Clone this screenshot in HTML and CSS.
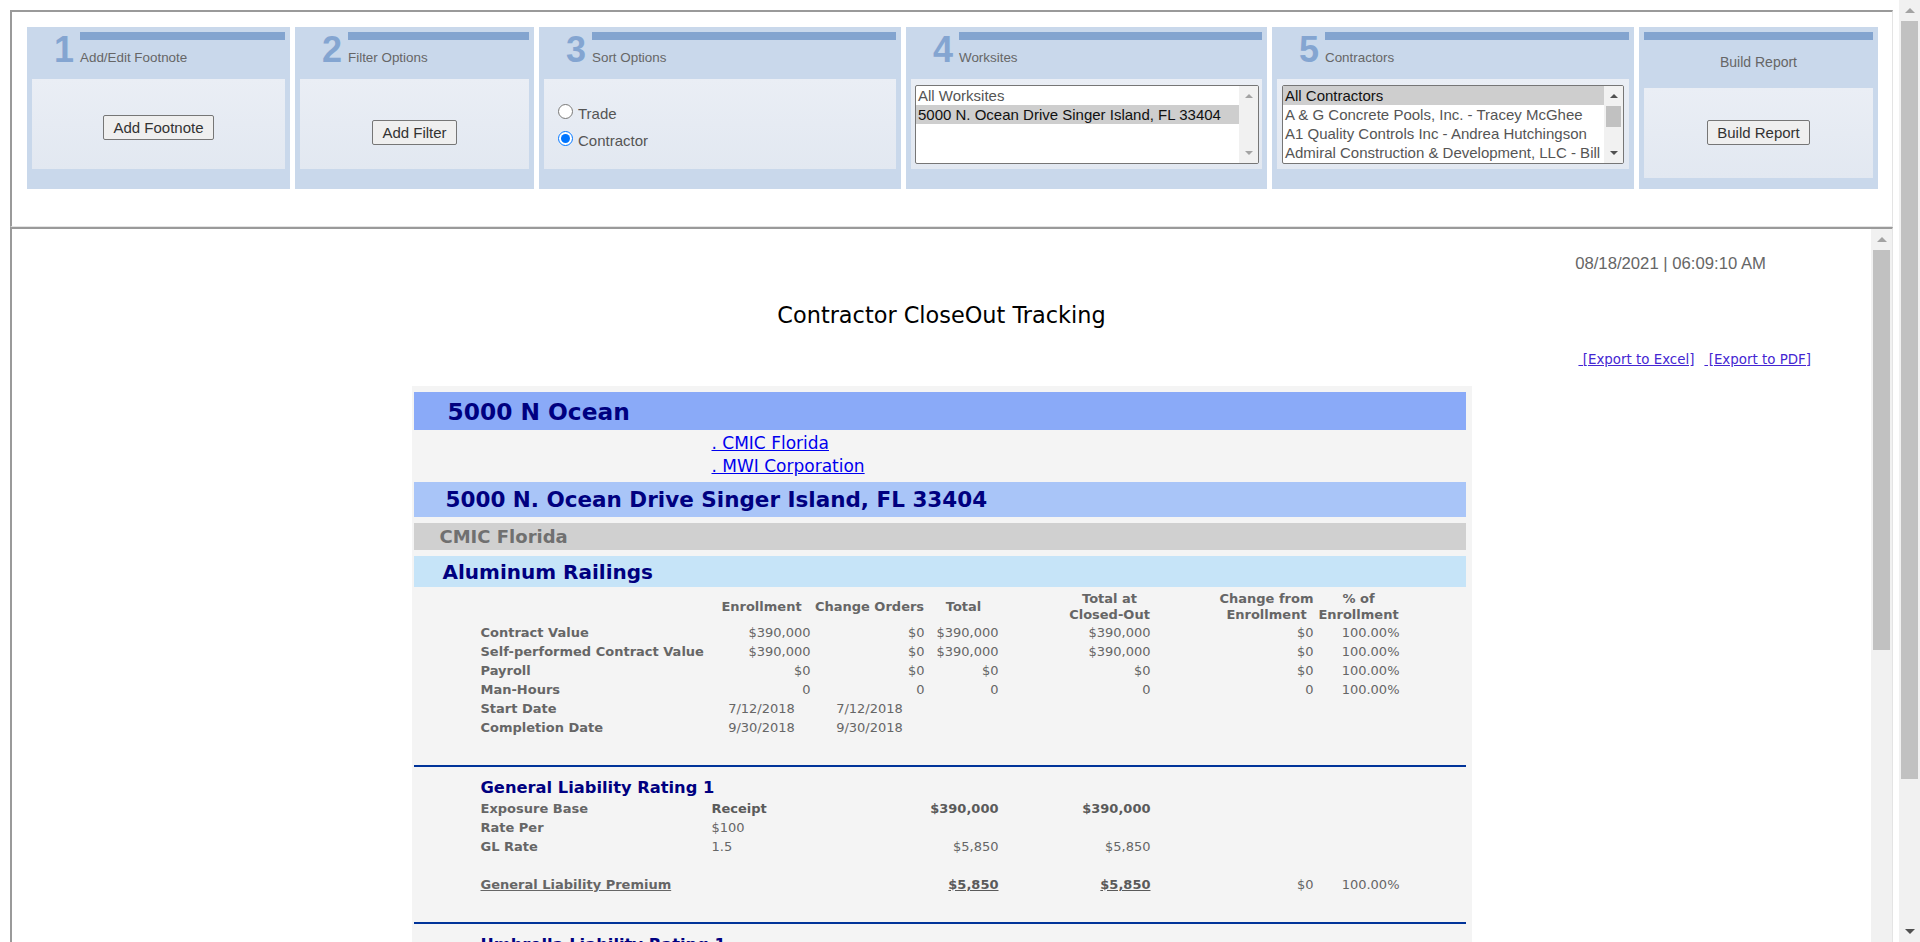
FILE: index.html
```html
<!DOCTYPE html>
<html>
<head>
<meta charset="utf-8">
<title>Contractor CloseOut Tracking</title>
<link rel="stylesheet" href="styles.css">
</head>
<body>
<div class="viewport">
  <div class="page">
    <div class="topframe">
      <div class="steps">
        <section class="step w-263">
          <div class="step-head">
            <span class="step-num">1</span>
            <div class="step-label"><div class="step-bar"></div><div class="step-title">Add/Edit Footnote</div></div>
          </div>
          <div class="step-body pad-36"><button class="btn">Add Footnote</button></div>
        </section>
        <section class="step w-239">
          <div class="step-head">
            <span class="step-num">2</span>
            <div class="step-label"><div class="step-bar"></div><div class="step-title">Filter Options</div></div>
          </div>
          <div class="step-body pad-41"><button class="btn">Add Filter</button></div>
        </section>
        <section class="step w-362">
          <div class="step-head">
            <span class="step-num">3</span>
            <div class="step-label"><div class="step-bar"></div><div class="step-title">Sort Options</div></div>
          </div>
          <div class="step-body radios">
            <label class="radio-row"><input type="radio" name="sort" class="radio"><span>Trade</span></label>
            <label class="radio-row"><input type="radio" name="sort" class="radio" checked><span>Contractor</span></label>
          </div>
        </section>
        <section class="step w-361">
          <div class="step-head">
            <span class="step-num">4</span>
            <div class="step-label"><div class="step-bar"></div><div class="step-title">Worksites</div></div>
          </div>
          <div class="step-body">
            <div class="listbox lb-work">
              <div class="list-items">
                <div class="opt">All Worksites</div>
                <div class="opt sel">5000 N. Ocean Drive Singer Island, FL 33404</div>
              </div>
              <div class="lb-scroll">
                <span class="arrow-btn"><i class="tri up dim"></i></span>
                <span class="lb-track"></span>
                <span class="arrow-btn"><i class="tri down dim"></i></span>
              </div>
            </div>
          </div>
        </section>
        <section class="step w-362">
          <div class="step-head">
            <span class="step-num">5</span>
            <div class="step-label"><div class="step-bar"></div><div class="step-title">Contractors</div></div>
          </div>
          <div class="step-body">
            <div class="listbox lb-con">
              <div class="list-items">
                <div class="opt sel">All Contractors</div>
                <div class="opt">A &amp; G Concrete Pools, Inc. - Tracey McGhee</div>
                <div class="opt">A1 Quality Controls Inc - Andrea Hutchingson</div>
                <div class="opt">Admiral Construction &amp; Development, LLC - Bill</div>
              </div>
              <div class="lb-scroll">
                <span class="arrow-btn"><i class="tri up"></i></span>
                <span class="lb-track"><span class="lb-thumb"></span></span>
                <span class="arrow-btn"><i class="tri down"></i></span>
              </div>
            </div>
          </div>
        </section>
        <section class="step w-239">
          <div class="step-head head-center">
            <div class="step-bar"></div>
            <div class="step-title big">Build Report</div>
          </div>
          <div class="step-body pad-32"><button class="btn">Build Report</button></div>
        </section>
      </div>
    </div>

    <div class="botframe">
      <div class="report-area">
        <div class="stamp">08/18/2021 | 06:09:10 AM</div>
        <h1 class="report-title">Contractor CloseOut Tracking</h1>
        <div class="exports">
          <a href="#" class="export">&nbsp;[Export to Excel]</a>
          <a href="#" class="export">&nbsp;[Export to PDF]</a>
        </div>

        <div class="report">
          <div class="bar bar-site">5000 N Ocean</div>
          <div class="links">
            <a href="#" class="rlink">. CMIC Florida</a>
            <a href="#" class="rlink">. MWI Corporation</a>
          </div>
          <div class="bar bar-addr">5000 N. Ocean Drive Singer Island, FL 33404</div>
          <div class="bar bar-co">CMIC Florida</div>
          <div class="bar bar-trade">Aluminum Railings</div>

          <div class="grid main-grid">
            <div class="hd c-lab"></div>
            <div class="hd c-enr">Enrollment</div>
            <div class="hd c-co">Change Orders</div>
            <div class="hd c-tot">Total</div>
            <div class="hd c-closed">Total at<br>Closed-Out</div>
            <div class="hd c-chg">Change from<br>Enrollment</div>
            <div class="hd c-pct">% of<br>Enrollment</div>

            <div class="lab">Contract Value</div>
            <div class="num c-enr">$390,000</div>
            <div class="num c-co">$0</div>
            <div class="num c-tot">$390,000</div>
            <div class="num c-closed">$390,000</div>
            <div class="num c-chg">$0</div>
            <div class="num c-pct">100.00%</div>

            <div class="lab">Self-performed Contract Value</div>
            <div class="num c-enr">$390,000</div>
            <div class="num c-co">$0</div>
            <div class="num c-tot">$390,000</div>
            <div class="num c-closed">$390,000</div>
            <div class="num c-chg">$0</div>
            <div class="num c-pct">100.00%</div>

            <div class="lab">Payroll</div>
            <div class="num c-enr">$0</div>
            <div class="num c-co">$0</div>
            <div class="num c-tot">$0</div>
            <div class="num c-closed">$0</div>
            <div class="num c-chg">$0</div>
            <div class="num c-pct">100.00%</div>

            <div class="lab">Man-Hours</div>
            <div class="num c-enr">0</div>
            <div class="num c-co">0</div>
            <div class="num c-tot">0</div>
            <div class="num c-closed">0</div>
            <div class="num c-chg">0</div>
            <div class="num c-pct">100.00%</div>

            <div class="lab">Start Date</div>
            <div class="date c-enr">7/12/2018</div>
            <div class="date c-co">7/12/2018</div>

            <div class="lab">Completion Date</div>
            <div class="date c-enr">9/30/2018</div>
            <div class="date c-co">9/30/2018</div>
          </div>

          <div class="rule"></div>

          <div class="grid rating-grid">
            <div class="rating-title">General Liability Rating 1</div>

            <div class="lab">Exposure Base</div>
            <div class="txt strong c-enr">Receipt</div>
            <div class="num strong c-tot">$390,000</div>
            <div class="num strong c-closed">$390,000</div>

            <div class="lab">Rate Per</div>
            <div class="txt c-enr">$100</div>

            <div class="lab">GL Rate</div>
            <div class="txt c-enr">1.5</div>
            <div class="num c-tot">$5,850</div>
            <div class="num c-closed">$5,850</div>

            <div class="blank"></div>

            <div class="lab"><span class="u">General Liability Premium</span></div>
            <div class="num strong c-tot"><span class="u">$5,850</span></div>
            <div class="num strong c-closed"><span class="u">$5,850</span></div>
            <div class="num c-chg">$0</div>
            <div class="num c-pct">100.00%</div>
          </div>

          <div class="rule"></div>

          <div class="grid rating-grid">
            <div class="rating-title">Umbrella Liability Rating 1</div>
            <div class="lab">Exposure Base</div>
            <div class="txt strong c-enr">Receipt</div>
          </div>
        </div>
      </div>
      <div class="frame-scroll">
        <span class="sb-btn"><i class="tri big up dim"></i></span>
        <span class="sb-track"><span class="sb-thumb frame-thumb"></span></span>
      </div>
    </div>
  </div>

  <div class="win-scroll">
    <span class="sb-btn"><i class="tri big up dim"></i></span>
    <span class="sb-track"><span class="sb-thumb win-thumb"></span></span>
    <span class="sb-btn"><i class="tri big down"></i></span>
  </div>
</div>
</body>
</html>
```

FILE: styles.css
```css
html, body {
  margin: 0;
  padding: 0;
  background: #fff;
  overflow: hidden;
}

.viewport {
  display: flex;
  width: 1920px;
  height: 942px;
  overflow: hidden;
}

.page {
  flex: 0 0 1899px;
  box-sizing: border-box;
  padding: 10px 6px 0 10px;
  display: flex;
  flex-direction: column;
  min-height: 0;
}

/* ---------- top frame ---------- */
.topframe {
  flex: 0 0 217px;
  box-sizing: border-box;
  border-top: 2px solid #9a9a9a;
  border-left: 2px solid #9a9a9a;
  border-right: 1px solid #e4e4e4;
  border-bottom: 1px solid #e4e4e4;
  font-family: "Liberation Sans", Arial, sans-serif;
}

.steps {
  display: flex;
  gap: 5px;
  padding: 15px 14px 0 15px;
}

.step {
  height: 162px;
  box-sizing: border-box;
  padding: 5px 5px 0;
  background: #c9d8eb;
  display: flex;
  flex-direction: column;
  flex: 0 0 auto;
}
.w-263 { width: 263px; }
.w-239 { width: 239px; }
.w-362 { width: 362px; }
.w-361 { width: 361px; }

.step-head {
  display: flex;
  height: 47px;
}

.step-num {
  width: 48px;
  box-sizing: border-box;
  padding-right: 6px;
  text-align: right;
  font: bold 36px/36px "Liberation Sans", Arial, sans-serif;
  color: #84a5d1;
}

.step-label {
  flex: 1;
  display: flex;
  flex-direction: column;
}

.step-bar {
  height: 8px;
  background: #83a4cf;
}

.step-title {
  margin-top: 10px;
  font-size: 13.4px;
  line-height: 15px;
  color: #666;
}

.head-center {
  flex-direction: column;
  height: 56px;
}
.step-title.big {
  margin-top: 14px;
  font-size: 14px;
  line-height: 16px;
  text-align: center;
}

.step-body {
  height: 90px;
  box-sizing: border-box;
  background: linear-gradient(#eaeef5, #e2e8f1);
}
.pad-36 { padding-top: 36px; text-align: center; }
.pad-41 { padding-top: 41px; text-align: center; }
.pad-32 { padding-top: 32px; text-align: center; }

.btn {
  height: 25px;
  box-sizing: border-box;
  margin: 0;
  padding: 0 9px;
  border: 1px solid #767676;
  border-radius: 2px;
  background: #efefef;
  font: 15px/17px "Liberation Sans", Arial, sans-serif;
  color: #333;
}

.radios {
  padding: 21px 0 0 14px;
  display: flex;
  flex-direction: column;
}
.radio-row {
  display: block;
  font-size: 15px;
  line-height: 27px;
  height: 27px;
  color: #555;
}
.radio {
  width: 15px;
  height: 15px;
  margin: 0 5px 1px 0;
  vertical-align: baseline;
  accent-color: #0075ff;
}

.listbox {
  display: flex;
  height: 79px;
  box-sizing: border-box;
  margin: 6px 3px 0 4px;
  border: 1px solid #767676;
  border-radius: 2px;
  background: #fff;
  overflow: hidden;
}
.lb-con { margin: 6px 5px 0 5px; }

.list-items {
  flex: 1;
  min-width: 0;
  overflow: hidden;
}
.opt {
  height: 19px;
  line-height: 19px;
  padding-left: 2px;
  white-space: nowrap;
  overflow: hidden;
  font-size: 15px;
  color: #555;
}
.opt.sel {
  background: #cecece;
  color: #111;
}

.lb-scroll {
  flex: 0 0 19px;
  background: #f1f1f1;
  display: flex;
  flex-direction: column;
}
.arrow-btn {
  height: 20px;
  display: flex;
  align-items: center;
  justify-content: center;
}
.lb-track {
  flex: 1;
  display: flex;
  flex-direction: column;
}
.lb-thumb {
  height: 21px;
  margin: 0 2px;
  background: #c1c1c1;
}

.tri {
  display: block;
  width: 0;
  height: 0;
  border-left: 4px solid transparent;
  border-right: 4px solid transparent;
}
.tri.up { border-bottom: 4px solid #505050; }
.tri.down { border-top: 4px solid #505050; }
.tri.up.dim { border-bottom-color: #a3a3a3; }
.tri.down.dim { border-top-color: #a3a3a3; }
.tri.big {
  border-left-width: 5px;
  border-right-width: 5px;
}
.tri.big.up { border-bottom-width: 5px; }
.tri.big.down { border-top-width: 5px; }

/* ---------- bottom frame ---------- */
.botframe {
  flex: 1;
  min-height: 0;
  display: flex;
  border-top: 2px solid #9a9a9a;
  border-left: 2px solid #9a9a9a;
  border-right: 1px solid #e4e4e4;
}

.report-area {
  flex: 1;
  min-width: 0;
  overflow: hidden;
}

.stamp {
  padding: 25px 105px 0 0;
  text-align: right;
  font: 16.7px/20px "Liberation Sans", Arial, sans-serif;
  color: #666;
}

.report-title {
  margin: 28px 0 0;
  text-align: center;
  font: normal 22.4px/26px "DejaVu Sans", Verdana, sans-serif;
  color: #000;
}

.exports {
  margin-top: 24px;
  padding-right: 60px;
  display: flex;
  justify-content: flex-end;
  gap: 10px;
  font: 13.4px/16px "DejaVu Sans", Verdana, sans-serif;
}
.export {
  color: #4426d2;
  text-decoration: underline;
}

.report {
  width: 1060px;
  box-sizing: border-box;
  margin: 18px auto 0;
  padding: 6px 6px 0 2px;
  background: #f4f4f4;
  font-family: "DejaVu Sans", Verdana, sans-serif;
}

.bar {
  display: flex;
  align-items: center;
  font-weight: bold;
  color: #000080;
  white-space: nowrap;
}
.bar-site {
  height: 38px;
  padding-left: 34px;
  font-size: 23.3px;
  background: #8aaaf8;
}
.bar-addr {
  height: 35px;
  padding-left: 32px;
  font-size: 21.5px;
  background: #a9c5f8;
}
.bar-co {
  margin-top: 6px;
  height: 27px;
  padding-left: 26px;
  font-size: 18px;
  color: #707070;
  background: #d0d0d0;
}
.bar-trade {
  margin-top: 6px;
  height: 31px;
  padding-left: 29px;
  font-size: 20px;
  background: #c6e4f8;
}

.links {
  padding: 2px 0 4px 298px;
  display: flex;
  flex-direction: column;
  align-items: flex-start;
}
.rlink {
  font-size: 17px;
  line-height: 23px;
  color: #0000ee;
  text-decoration: underline;
}

.grid {
  display: grid;
  grid-template-columns: 233px 102px 114px 74px 66px 86px 65px 98px 86px;
  grid-auto-rows: 19px;
  margin-left: 64px;
  width: 924px;
  font-size: 13px;
  line-height: 19px;
  color: #666;
}
.main-grid {
  margin-top: 3px;
  grid-template-rows: 33px;
}

.hd {
  grid-row: 1;
  align-self: center;
  text-align: center;
  font-weight: bold;
  line-height: 16px;
}
.c-lab { grid-column: 1; }
.c-enr { grid-column: 2; }
.c-co { grid-column: 3; }
.c-tot { grid-column: 4; }
.c-closed { grid-column: 6; }
.c-chg { grid-column: 8; }
.c-pct { grid-column: 9; }

.lab {
  grid-column: 1;
  padding-left: 3px;
  font-weight: bold;
  white-space: nowrap;
}
.num {
  text-align: right;
  padding-right: 2px;
  white-space: nowrap;
}
.date {
  text-align: center;
}
.txt {
  padding-left: 1px;
}
.strong {
  font-weight: bold;
  color: #5a5a5a;
}
.u {
  text-decoration: underline;
}
.blank {
  grid-column: 1 / -1;
}

.rule {
  margin-top: 28px;
  height: 2px;
  background: #003399;
}

.rating-grid {
  padding-top: 10px;
  grid-template-rows: 22px;
}
.rating-title {
  grid-column: 1 / -1;
  padding-left: 3px;
  font-size: 16.3px;
  line-height: 22px;
  font-weight: bold;
  color: #000080;
}

/* ---------- scrollbars ---------- */
.frame-scroll,
.win-scroll {
  flex: 0 0 21px;
  background: #f1f1f1;
  display: flex;
  flex-direction: column;
}
.sb-btn {
  flex: 0 0 21px;
  display: flex;
  align-items: center;
  justify-content: center;
}
.sb-track {
  flex: 1;
  display: flex;
  flex-direction: column;
}
.sb-thumb {
  margin: 0 2px;
  background: #c1c1c1;
}
.frame-thumb { height: 400px; }
.win-thumb { height: 758px; }
```
